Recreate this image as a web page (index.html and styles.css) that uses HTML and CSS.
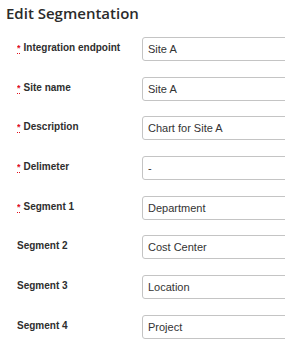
FILE: index.html
```html
<!DOCTYPE html>
<html>
<head>
    <meta charset="UTF-8">
    <title>Edit Segmentation</title>
    <link rel="stylesheet" href="styles.css">
</head>
<body>

    <h1 class="title">Edit Segmentation</h1>

    <form class="seg-form">
        <div class="row">
            <label class="label"><abbr class="req" title="required">*</abbr>Integration endpoint</label>
            <input class="field" type="text" value="Site A">
        </div>
        <div class="row">
            <label class="label"><abbr class="req" title="required">*</abbr>Site name</label>
            <input class="field" type="text" value="Site A">
        </div>
        <div class="row">
            <label class="label"><abbr class="req" title="required">*</abbr>Description</label>
            <input class="field" type="text" value="Chart for Site A">
        </div>
        <div class="row">
            <label class="label"><abbr class="req" title="required">*</abbr>Delimeter</label>
            <input class="field" type="text" value="-">
        </div>
        <div class="row">
            <label class="label"><abbr class="req" title="required">*</abbr>Segment 1</label>
            <input class="field" type="text" value="Department">
        </div>
        <div class="row">
            <label class="label">Segment 2</label>
            <input class="field" type="text" value="Cost Center">
        </div>
        <div class="row">
            <label class="label">Segment 3</label>
            <input class="field" type="text" value="Location">
        </div>
        <div class="row">
            <label class="label">Segment 4</label>
            <input class="field" type="text" value="Project">
        </div>
    </form>

</body>
</html>
```

FILE: styles.css
```css
* {
    box-sizing: border-box;
}

body {
    margin: 0;
    padding: 0 0 0 6px;
    background: #fff;
    overflow: hidden;
}

.title {
    margin: 0;
    padding-top: 3px;
    font-family: "Open Sans", sans-serif;
    font-weight: 600;
    font-size: 15px;
    line-height: 21px;
    color: #2b2b2b;
}

.seg-form {
    display: flex;
    flex-direction: column;
    gap: 15.7px;
    margin-top: 13px;
    padding-left: 11px;
}

.row {
    display: grid;
    grid-template-columns: 125px 1fr;
    align-items: start;
    overflow: hidden;
}

.label {
    padding-top: 4px;
    font-family: "Liberation Sans", Arial, sans-serif;
    font-weight: bold;
    font-size: 10px;
    line-height: 14px;
    color: #2e2e2e;
}

.req {
    margin-right: 3px;
    color: #e0101e;
    font-size: 9px;
    text-decoration: underline dotted #e0101e;
    text-underline-offset: 2px;
}

.field {
    height: 24px;
    width: calc(100% + 10px);
    padding: 0 5px;
    border: 1px solid #c4c4c4;
    border-radius: 3px;
    font-family: "Liberation Sans", Arial, sans-serif;
    font-size: 11px;
    color: #333;
    background: #fff;
}
```
